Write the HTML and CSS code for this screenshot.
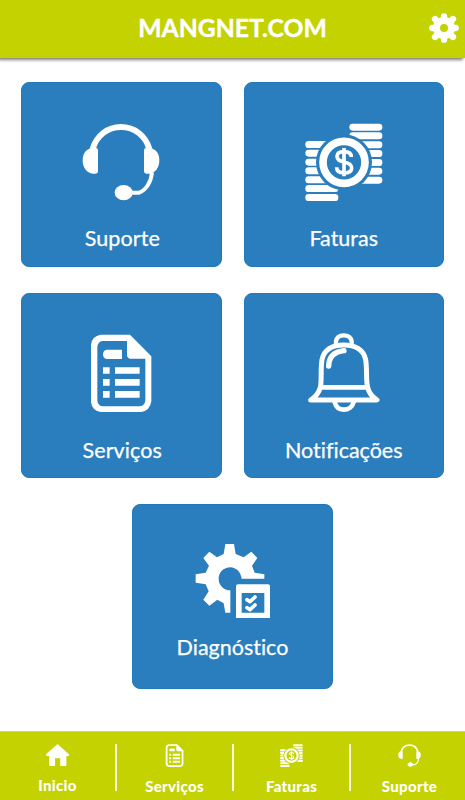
FILE: index.html
```html
<!DOCTYPE html>
<html lang="pt-BR">
<head>
    <meta charset="UTF-8">
    <meta name="viewport" content="width=device-width, initial-scale=1.0">
    <title>MANGNET.COM</title>
    <link rel="stylesheet" href="styles.css">
</head>
<body>
    <!-- Shared icons -->
    <svg class="sprite" width="0" height="0">
        <symbol id="headset" viewBox="39 38 234 234" overflow="visible">
            <path d="M71 116C82 76 116 50 156 50S230 76 241 116" fill="none" stroke="#fff" stroke-width="18"/>
            <path d="M66 113H80Q87 113 87 120V183Q87 190 80 190H72C52 188 41 171 41 149C41 130 51 118 66 113Z"/>
            <path d="M246 113H232Q225 113 225 120V183Q225 190 232 190H240C260 188 271 171 271 149C271 130 261 118 246 113Z"/>
            <path d="M249 186C246 217 230 240 210 247H185" fill="none" stroke="#fff" stroke-width="12"/>
            <ellipse cx="164" cy="247" rx="27" ry="23"/>
        </symbol>
        <symbol id="coins" viewBox="44 38 234 234" overflow="visible">
            <mask id="coin-gap" maskUnits="userSpaceOnUse" x="30" y="30" width="260" height="260">
                <rect x="30" y="30" width="260" height="260" fill="#fff"/>
                <circle cx="161" cy="156" r="84" fill="#000"/>
            </mask>
            <g mask="url(#coin-gap)">
                <rect x="177" y="40" width="99" height="21" rx="10"/>
                <rect x="177" y="66" width="99" height="21" rx="10"/>
                <rect x="177" y="93" width="99" height="21" rx="10"/>
                <rect x="177" y="119" width="99" height="21" rx="10"/>
                <rect x="177" y="146" width="99" height="21" rx="10"/>
                <rect x="177" y="172" width="99" height="21" rx="10"/>
                <rect x="177" y="199" width="99" height="21" rx="10"/>
                <rect x="45" y="92" width="99" height="21" rx="10"/>
                <rect x="45" y="118" width="99" height="21" rx="10"/>
                <rect x="45" y="145" width="99" height="21" rx="10"/>
                <rect x="45" y="171" width="99" height="21" rx="10"/>
                <rect x="45" y="198" width="99" height="21" rx="10"/>
                <rect x="45" y="224" width="99" height="21" rx="10"/>
                <rect x="45" y="251" width="99" height="21" rx="10"/>
            </g>
            <circle cx="161" cy="156" r="63" fill="none" stroke="#fff" stroke-width="23"/>
            <path d="M183 140C183 128 174 124 161 124C147 124 140 129 140 138C140 149 148 152 161 155C176 158 184 162 184 173C184 184 175 188 161 188C146 188 139 182 139 171M161 113V198" fill="none" stroke="#fff" stroke-width="11"/>
        </symbol>
        <symbol id="document" viewBox="36 42 234 234" overflow="visible">
            <path fill-rule="evenodd" d="M92 44H180L244 109V244Q240 272 214 276H92Q66 272 63 246V74Q66 48 92 44ZM97 63Q84 65 82 80V242Q84 256 97 259H210Q224 256 226 242V116H182Q171 115 171 104V63Z"/>
            <path d="M110 89H156V117H110Q99 115 99 103Q99 91 110 89Z"/>
            <path d="M99 142H119V161H99ZM135 142H209V161H135ZM99 177H119V197H99ZM135 177H209V197H135ZM99 213H119V233H99ZM135 213H209V233H135Z"/>
        </symbol>
    </svg>

    <header class="header">
        <h1>MANGNET.COM</h1>
        <svg class="gear" viewBox="-45 -45 90 90">
            <path fill-rule="evenodd" d="M0-33A33 33 0 1 0 0 33A33 33 0 1 0 0-33ZM0-12A12 12 0 1 0 0 12A12 12 0 1 0 0-12Z"/>
            <path d="M0-26V-35M0 26V35M-26 0H-35M26 0H35M-18-18L-27-27M18-18L27-27M-18 18L-27 27M18 18L27 27" fill="none" stroke="#fff" stroke-width="19" stroke-linecap="round"/>
        </svg>
    </header>

    <main class="menu">
        <a class="card">
            <svg class="card-icon"><use href="#headset"/></svg>
            <span class="card-label label-offset">Suporte</span>
        </a>
        <a class="card">
            <svg class="card-icon"><use href="#coins"/></svg>
            <span class="card-label">Faturas</span>
        </a>
        <a class="card card-low">
            <svg class="card-icon"><use href="#document"/></svg>
            <span class="card-label label-offset">Serviços</span>
        </a>
        <a class="card card-low">
            <svg class="card-icon" viewBox="75 42 234 234">
                <g fill="none" stroke="#fff" stroke-linejoin="round" stroke-linecap="round">
                    <path d="M121 202C126 178 121 150 126 119C132 90 156 75 191 75S251 90 257 119C262 150 257 178 263 202C266 217 277 231 291 240H92C106 231 117 217 121 202Z" stroke-width="15"/>
                    <path d="M122 202H262" stroke-width="14"/>
                    <path d="M168 71V64C170 52 178 46 191 46S213 52 215 64V71" stroke-width="13"/>
                    <path d="M146 138C147 111 163 95 192 92" stroke-width="16"/>
                    <path d="M164 246C168 262 178 269 191 269S217 262 221 246" stroke-width="14"/>
                </g>
            </svg>
            <span class="card-label">Notificações</span>
        </a>
        <a class="card card-short">
            <svg class="card-icon" viewBox="71 45 234 234">
                <path d="M165 42H191L196 72L220 82L243 65L261 84L245 107L253 128L282 133V146H214C212 127 198 112 180 112C160 112 145 127 145 146C145 166 160 181 180 181V248H165L160 220L141 209L117 227L99 209L115 184L106 163L76 158V133L106 128L116 107L99 84L117 65L140 82L160 72Z"/>
                <path fill-rule="evenodd" d="M203 163H293Q299 163 299 169V264H197V169Q197 163 203 163ZM214 189V248H282V189Z"/>
                <path d="M230 209L239 215L254 201M230 233L239 239L254 225" fill="none" stroke="#fff" stroke-width="11" stroke-linecap="round" stroke-linejoin="round"/>
            </svg>
            <span class="card-label">Diagnóstico</span>
        </a>
    </main>

    <nav class="navbar">
        <a class="nav-item">
            <svg class="nav-icon" viewBox="136 58 71 69">
                <path d="M171.500 58L207 90Q209 95 204 95H199V123Q199 126 196 126H180V102H164V126H149Q146 126 146 123V95H139Q134 95 136 90Z"/>
            </svg>
            <span>Inicio</span>
        </a>
        <a class="nav-item">
            <svg class="nav-icon"><use href="#document"/></svg>
            <span>Serviços</span>
        </a>
        <a class="nav-item">
            <svg class="nav-icon"><use href="#coins"/></svg>
            <span>Faturas</span>
        </a>
        <a class="nav-item">
            <svg class="nav-icon"><use href="#headset"/></svg>
            <span>Suporte</span>
        </a>
    </nav>
</body>
</html>
```
FILE: styles.css
```css
* {
    box-sizing: border-box;
}
body {
    font-family: Lato, "Open Sans", sans-serif;
    font-variant-ligatures: none;
    display: flex;
    flex-direction: column;
    height: 800px;
    margin: 0;
    background-color: #FFFFFF;
    color: #FFFFFF;
    overflow: hidden;
}
svg {
    fill: #FFFFFF;
    overflow: visible;
}
.sprite {
    position: absolute;
}
.header {
    display: grid;
    grid-template-columns: 1fr auto 1fr;
    align-items: center;
    height: 58px;
    padding: 0 6px 2px;
    background-color: #C3D200; /* Lime */
    box-shadow: -2px 2px 3px rgba(0,0,0,0.5);
}
.header h1 {
    grid-column: 2;
    margin: 0;
    font-size: 24.7px;
    font-weight: 700;
    line-height: 56px;
    -webkit-text-stroke: 0.4px #FFFFFF;
}
.gear {
    justify-self: end;
    width: 30px;
    height: 30px;
}
.menu {
    display: flex;
    flex-wrap: wrap;
    justify-content: center;
    align-content: flex-start;
    gap: 26px 22px;
    flex: 1;
    padding-top: 24px;
}
.card {
    display: flex;
    flex-direction: column;
    align-items: center;
    width: 200.5px;
    height: 185px;
    padding-top: 40px;
    border: 1px solid #1F79BB;
    border-radius: 8px;
    background-color: #2B7EBD; /* Blue */
}
.card-icon {
    width: 78px;
    height: 78px;
}
.card-label {
    margin-top: 23px;
    font-size: 21.5px;
    line-height: 28px;
    -webkit-text-stroke: 0.25px #FFFFFF;
}
.label-offset {
    padding-left: 2px;
    letter-spacing: 0.1px;
}
.card-low .card-label {
    margin-top: 24px;
}
.card-short .card-label {
    margin-top: 10px;
}
.navbar {
    display: grid;
    grid-template-columns: 117px 117px 117px 114px;
    height: 69px;
    padding-top: 12px;
    border-top: 1px solid #D3DE4D;
    background-color: #C3D200;
}
.nav-item {
    display: flex;
    flex-direction: column;
    align-items: center;
    height: 47px;
    border-right: 2px solid #F7F9D8;
    font-size: 15px;
    font-weight: 900;
    line-height: 20px;
    letter-spacing: 0.3px;
}
.nav-item:last-child {
    padding-left: 3px;
    border-right: 0;
}
.nav-icon {
    width: 23px;
    height: 23px;
    margin-bottom: 9px;
}
```
